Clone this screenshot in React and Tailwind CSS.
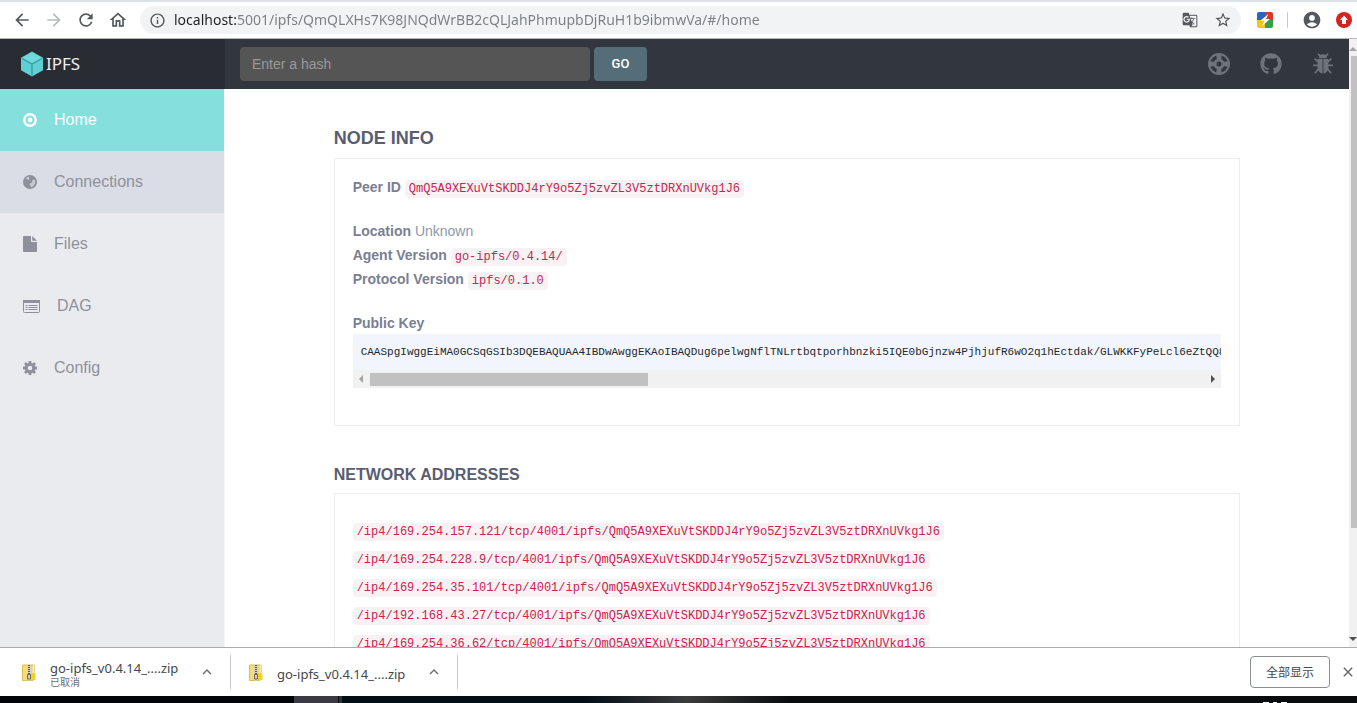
import { useState } from "react";
import { FaGithub } from "react-icons/fa";
import {
  MdArrowBack,
  MdArrowForward,
  MdRefresh,
  MdOutlineHome,
  MdInfoOutline,
  MdGTranslate,
  MdStarBorder,
  MdAccountCircle,
  MdKeyboardArrowUp,
  MdClose,
} from "react-icons/md";

const PEER_ID = "QmQ5A9XEXuVtSKDDJ4rY9o5Zj5zvZL3V5ztDRXnUVkg1J6";

const PUBLIC_KEY =
  "CAASpgIwggEiMA0GCSqGSIb3DQEBAQUAA4IBDwAwggEKAoIBAQDug6pelwgNflTNLrtbqtporhbnzki5IQE0bGjnzw4PjhjufR6wO2q1hEctdak/GLWKKFyPeLcl6eZtQQ8O";

const addresses = [
  "/ip4/169.254.157.121/tcp/4001/ipfs/",
  "/ip4/169.254.228.9/tcp/4001/ipfs/",
  "/ip4/169.254.35.101/tcp/4001/ipfs/",
  "/ip4/192.168.43.27/tcp/4001/ipfs/",
  "/ip4/169.254.36.62/tcp/4001/ipfs/",
];

const RecordIcon = () => (
  <svg viewBox="0 0 14 14" className="h-3.5 w-3.5">
    <circle cx="7" cy="7" r="5.7" fill="none" stroke="currentColor" strokeWidth="2.4" />
    <circle cx="7" cy="7" r="2.4" fill="currentColor" />
  </svg>
);

const GlobeIcon = () => (
  <svg viewBox="0 0 14 14" className="h-3.5 w-3.5">
    <circle cx="7" cy="7" r="7" fill="currentColor" />
    <path
      d="M2 4.4 3.800 4.700 5 5.800 4.600 7.200 6.400 8 7.600 9.200 6.400 10.600 6 12.200C4 11.800 2 9.600 1.800 7.400zM8 1.400 9.800 2.200 11.400 3.800 9.600 4 8.800 5.400 7.800 4.200z"
      fill="#dadde5"
      opacity=".75"
      transform="matrix(-1 0 0 1 14 0)"
    />
  </svg>
);

const FileIcon = () => (
  <svg viewBox="0 0 14 16" className="h-4 w-3.5" fill="currentColor">
    <path d="M0 .8Q0 0 .8 0H8v5.2q0 .8.8.8H14v9.2q0 .8-.8.8H.8q-.8 0-.8-.8z" />
    <path d="M9.2 0 14 4.8H9.2z" />
  </svg>
);

const ListIcon = () => (
  <svg viewBox="0 0 17 13" className="h-[13px] w-[17px]">
    <rect x=".5" y=".5" width="16" height="12" rx="1" fill="none" stroke="currentColor" />
    <path d="M0 0h17v3H0z" fill="currentColor" />
    <path
      d="M2.5 5.5h2M2.5 7.5h2M2.5 9.5h2M5.5 5.5h9M5.5 7.5h9M5.5 9.5h9"
      stroke="currentColor"
      fill="none"
    />
  </svg>
);

const CogIcon = () => (
  <svg viewBox="0 0 14 14" className="h-3.5 w-3.5">
    <circle cx="7" cy="7" r="3.7" fill="none" stroke="currentColor" strokeWidth="3" />
    <path
      d="M7 0v2.6M7 11.4V14M0 7h2.6M11.4 7H14M2 2l1.9 1.9M10.1 10.1 12 12M2 12l1.9-1.9M10.1 3.9 12 2"
      stroke="currentColor"
      strokeWidth="2.8"
    />
  </svg>
);

const LifeRingIcon = () => (
  <svg viewBox="0 0 24 24" className="h-6 w-6" fill="none" stroke="currentColor">
    <circle cx="12" cy="12" r="10" strokeWidth="2" />
    <circle cx="12" cy="12" r="4" strokeWidth="3" />
    <path d="M9 2h6l-1 6h-4zM9 22h6l-1-6h-4zM2 9v6l6-1v-4zM22 9v6l-6-1v-4z" fill="currentColor" stroke="none" />
  </svg>
);

const BugIcon = () => (
  <svg viewBox="0 0 20 22" className="h-[22px] w-5">
    <path d="M6 5.2a4 4 0 0 1 8 0z" fill="currentColor" />
    <path
      d="M4.600 6h5v14.500C6.600 20 4.600 17.600 4.600 14.400zM15.400 6h-5v14.500c3-.5 5-2.900 5-6.100z"
      fill="currentColor"
    />
    <path
      d="M5 .8l2.400 2.400M15 .8l-2.400 2.400M5.400 9 1.600 5.600M14.600 9l3.800-3.400M5 12.400H0M15 12.400h5M5.600 15.400l-3.600 4.800M14.400 15.400l3.600 4.800"
      stroke="currentColor"
      strokeWidth="1.700"
      fill="none"
    />
  </svg>
);

const CubeLogo = () => (
  <svg viewBox="0 0 24 26" className="h-[26px] w-6">
    <path d="M12 .5 23 6.800v12.400L12 25.500 1 19.200V6.800z" fill="#5fd0d3" />
    <path d="M12 1.500 22 7.100 12 12.600 2 7.100z" fill="#6fdad9" />
    <path d="M2 7.400 12 13l10-5.600M12 13v11.500" stroke="#38969e" strokeWidth="1.200" fill="none" />
  </svg>
);

const ZipIcon = () => (
  <svg viewBox="0 0 14 17" className="h-[17px] w-3.5 shrink-0">
    <path d="M.5 1h10.500v15.500H.5z" fill="#f5dc7a" stroke="#e0bf4e" />
    <path d="M10 1h2.500v8.500H10z" fill="#fbeeb0" stroke="#d9bd5a" strokeWidth=".6" />
    <path d="M9 9.500h4.500v6.500H9z" fill="#f2d21f" />
    <path d="M5 1h4v15.500H5z" fill="#d8d2c0" />
    <path d="M7 1v9" stroke="#5b5346" strokeWidth="2" strokeDasharray="1 1" />
    <path d="M5.500 10.500h3v4.500h-3z" fill="none" stroke="#6d6557" />
  </svg>
);

const ExtensionIcon = () => (
  <svg viewBox="0 0 16 16" className="h-4 w-4">
    <path d="M2 0h6v8H0V2a2 2 0 0 1 2-2z" fill="#2a62c9" />
    <path d="M8 0h6a2 2 0 0 1 2 2v6H8z" fill="#e0352b" />
    <path d="M0 8h8v8H2a2 2 0 0 1-2-2z" fill="#f6c519" />
    <path d="M8 8h8v6a2 2 0 0 1-2 2H8z" fill="#2fa24c" />
    <path d="M11.500 2 3.500 8.500H7.500L5 14l8-7H9z" fill="#fff" />
  </svg>
);

const UpdateIcon = () => (
  <svg viewBox="0 0 16 16" className="h-4 w-4">
    <circle cx="8" cy="8" r="8" fill="#d3251f" />
    <path d="M8 3.500 12 8h-2v4H6V8H4z" fill="#fff" />
  </svg>
);

const navItems = [
  { label: "Home", icon: RecordIcon },
  { label: "Connections", icon: GlobeIcon },
  { label: "Files", icon: FileIcon },
  { label: "DAG", icon: ListIcon },
  { label: "Config", icon: CogIcon },
];

const navStyles = {
  Home: "bg-[#84dfdd] text-white",
  Connections: "bg-[#dadde5] text-[#8e919b]",
};

const Code = ({ children }) => (
  <code className="rounded-sm bg-[#f9f2f4] px-1 py-0.5 font-['Liberation_Mono',monospace] text-xs text-[#c7254e]">
    {children}
  </code>
);

const BrowserBar = () => (
  <div className="shrink-0 border-b border-[#b4b6b8] bg-white">
    <div className="h-0.5 bg-[#dee1e6]"></div>
    <div className="flex h-9 items-center gap-3 pl-3 pr-[5px] text-[#55585c]">
      <button aria-label="Back"><MdArrowBack size={20} /></button>
      <button aria-label="Forward" className="text-[#b9bbbe]"><MdArrowForward size={20} /></button>
      <button aria-label="Reload"><MdRefresh size={20} /></button>
      <button aria-label="Home page"><MdOutlineHome size={20} /></button>
      <div className="flex h-7 flex-1 items-center gap-2 rounded-full bg-[#f1f3f4] px-[9px]">
        <MdInfoOutline size={17} className="shrink-0" />
        <input
          aria-label="Address"
          className="min-w-0 flex-1 bg-[linear-gradient(90deg,#202124_64px,#7b7f84_64px)] bg-clip-text font-['Noto_Sans',sans-serif] text-sm text-transparent outline-none"
          defaultValue="localhost:5001/ipfs/QmQLXHs7K98JNQdWrBB2cQLJahPhmupbDjRuH1b9ibmwVa/#/home"
        />
        <button aria-label="Translate" className="mr-2"><MdGTranslate size={16} /></button>
        <button aria-label="Bookmark"><MdStarBorder size={18} /></button>
      </div>
      <button aria-label="Extension" className="ml-1"><ExtensionIcon /></button>
      <span className="mx-0.5 h-4 w-px bg-[#c8cacd]"></span>
      <button aria-label="Account"><MdAccountCircle size={20} /></button>
      <button aria-label="Update" className="ml-0.5"><UpdateIcon /></button>
    </div>
  </div>
);

const Header = () => {
  const [hash, setHash] = useState("");

  return (
    <header className="flex h-[50px] shrink-0 bg-[#32363e]">
      <a href="#/home" className="flex w-[225px] shrink-0 items-center gap-0.5 bg-[#2a2c34] pl-5">
        <CubeLogo />
        <span className="font-['Noto_Sans',sans-serif] text-[17px] text-[#eceef0]">IPFS</span>
      </a>
      <form className="flex flex-1 items-center gap-1 pl-[15px]" onSubmit={(e) => e.preventDefault()}>
        <input
          aria-label="Hash"
          placeholder="Enter a hash"
          value={hash}
          onChange={(e) => setHash(e.target.value)}
          className="h-[34px] w-[350px] rounded-sm bg-[#555555] px-3 text-sm text-white outline-none placeholder:text-[#999999]"
        />
        <button className="h-[34px] w-[53px] rounded-sm bg-[#546d78] font-[Roboto,sans-serif] text-[13px] font-medium text-white">
          GO
        </button>
      </form>
      <div className="flex items-center gap-7 pr-3.5 text-[#6d727b]">
        <a href="#/help" aria-label="Help" className="flex w-6 justify-center"><LifeRingIcon /></a>
        <a href="#/github" aria-label="GitHub" className="flex w-6 justify-center"><FaGithub size={22} /></a>
        <a href="#/bugs" aria-label="Report a bug" className="flex w-6 justify-center"><BugIcon /></a>
      </div>
    </header>
  );
};

const Sidebar = () => (
  <nav className="w-[225px] shrink-0 border-r border-[#f4f5f7] bg-[#e9ebef]">
    {navItems.map(({ label, icon: Icon }) => (
      <a
        key={label}
        href={`#/${label.toLowerCase()}`}
        className={`flex h-[62px] items-center gap-[17px] pl-[23px] ${navStyles[label] || "text-[#8e919b]"}`}
      >
        <Icon />
        <span>{label}</span>
      </a>
    ))}
  </nav>
);

const NodeInfo = () => (
  <section>
    <h4 className="text-lg font-bold leading-5 text-[#5a5d70]">NODE INFO</h4>
    <div className="mt-2.5 border border-[#eceef0] px-[18px] pb-[37px] pt-4 text-sm leading-6 text-[#8d99ab]">
      <p>
        <strong className="text-[#7a8092]">Peer ID</strong> <Code>{PEER_ID}</Code>
      </p>
      <div className="mb-[21px] mt-5">
        <p>
          <strong className="text-[#7a8092]">Location</strong> Unknown
        </p>
        <p>
          <strong className="text-[#7a8092]">Agent Version</strong> <Code>go-ipfs/0.4.14/</Code>
        </p>
        <p>
          <strong className="text-[#7a8092]">Protocol Version</strong> <Code>ipfs/0.1.0</Code>
        </p>
      </div>
      <strong className="block leading-[22px] text-[#7a8092]">Public Key</strong>
      <pre className="overflow-hidden bg-[#f2f5fc] px-2 py-2 font-['Liberation_Mono',monospace] text-[11px] leading-5 text-[#25282d]">
        {PUBLIC_KEY}
      </pre>
      <div className="flex h-[18px] items-center bg-[#f1f1f1] px-1.5">
        <span className="h-0 w-0 border-y-4 border-r-4 border-y-transparent border-r-[#a3a3a3]"></span>
        <div className="flex-1 px-[7px]">
          <div className="h-[13px] w-1/3 bg-[#c1c1c1]"></div>
        </div>
        <span className="h-0 w-0 border-y-4 border-l-4 border-y-transparent border-l-[#505050]"></span>
      </div>
    </div>
  </section>
);

const NetworkAddresses = () => (
  <section className="mt-[39px]">
    <h4 className="text-base font-bold leading-5 text-[#5a5d70]">NETWORK ADDRESSES</h4>
    <ul className="mt-2 border border-[#eceef0] px-[18px] py-[22px]">
      {addresses.map((address) => (
        <li key={address} className="h-7 whitespace-nowrap leading-7">
          <Code>
            {address}
            {PEER_ID}
          </Code>
        </li>
      ))}
    </ul>
  </section>
);

const PageScrollbar = () => (
  <div className="flex w-2 shrink-0 flex-col items-end overflow-hidden bg-[#f1f1f1] pb-1.5 pt-2">
    <span className="h-0 w-0 border-x-4 border-b-4 border-x-transparent border-b-[#a3a3a3]"></span>
    <div className="w-1.5 flex-1 py-[5px]">
      <div className="h-[82%] bg-[#c1c1c1]"></div>
    </div>
    <span className="h-0 w-0 border-x-4 border-t-4 border-x-transparent border-t-[#505050]"></span>
  </div>
);

const DownloadItem = ({ note }) => (
  <div className="flex h-[34px] w-[227px] items-center border-r border-[#c4c6c8] pl-[18px] pr-3.5">
    <ZipIcon />
    <div className="ml-3.5 flex-1 whitespace-nowrap pt-1 font-['Noto_Sans','Noto_Sans_CJK_SC',sans-serif] text-[13px] leading-4 text-[#45484c]">
      <div>go-ipfs_v0.4.14_....zip</div>
      {note && <div className="text-[10px] leading-3 text-[#6b6e72]">{note}</div>}
    </div>
    <button aria-label="Download options" className="text-[#6b6e72]">
      <MdKeyboardArrowUp size={18} />
    </button>
  </div>
);

const DownloadShelf = () => (
  <footer className="flex h-[49px] shrink-0 items-center border-t border-[#a9abad] bg-white pl-1 pr-px">
    <DownloadItem note="已取消" />
    <DownloadItem />
    <div className="ml-auto flex items-center gap-2.5">
      <button className="h-8 w-20 rounded border border-[#8b8e92] font-['Noto_Sans_CJK_SC',sans-serif] text-xs text-[#45484c]">
        全部显示
      </button>
      <button aria-label="Close downloads" className="text-[#606368]">
        <MdClose size={16} />
      </button>
    </div>
  </footer>
);

const Taskbar = () => (
  <div className="flex h-[7px] shrink-0 bg-[#0a0b0d]">
    <div className="w-[294px] bg-[#030409]"></div>
    <div className="w-11 bg-[#3b3a44]"></div>
    <div className="ml-px w-[3px] bg-[#2b3238]"></div>
    <div className="w-[240px] bg-[#030d16]"></div>
    <div className="w-[210px] bg-linear-to-r from-[#030d16] via-[#3c3c3c] to-[#0a0b0d]"></div>
    <div className="ml-auto mr-[70px] flex items-end gap-1">
      <span className="h-px w-1.5 bg-white"></span>
      <span className="h-px w-1 bg-white"></span>
      <span className="h-px w-1.5 bg-white"></span>
    </div>
  </div>
);

export default function App() {
  return (
    <div className="flex h-screen flex-col overflow-hidden bg-white font-['Liberation_Sans',Arial,sans-serif]">
      <BrowserBar />
      <div className="flex min-h-0 flex-1">
        <div className="flex min-w-0 flex-1 flex-col">
          <Header />
          <div className="flex min-h-0 flex-1">
            <Sidebar />
            <main className="min-w-0 flex-1 overflow-hidden">
              <div className="mx-auto w-10/12 px-[15px] pt-[39px]">
                <NodeInfo />
                <NetworkAddresses />
              </div>
            </main>
          </div>
        </div>
        <PageScrollbar />
      </div>
      <DownloadShelf />
      <Taskbar />
    </div>
  );
}
